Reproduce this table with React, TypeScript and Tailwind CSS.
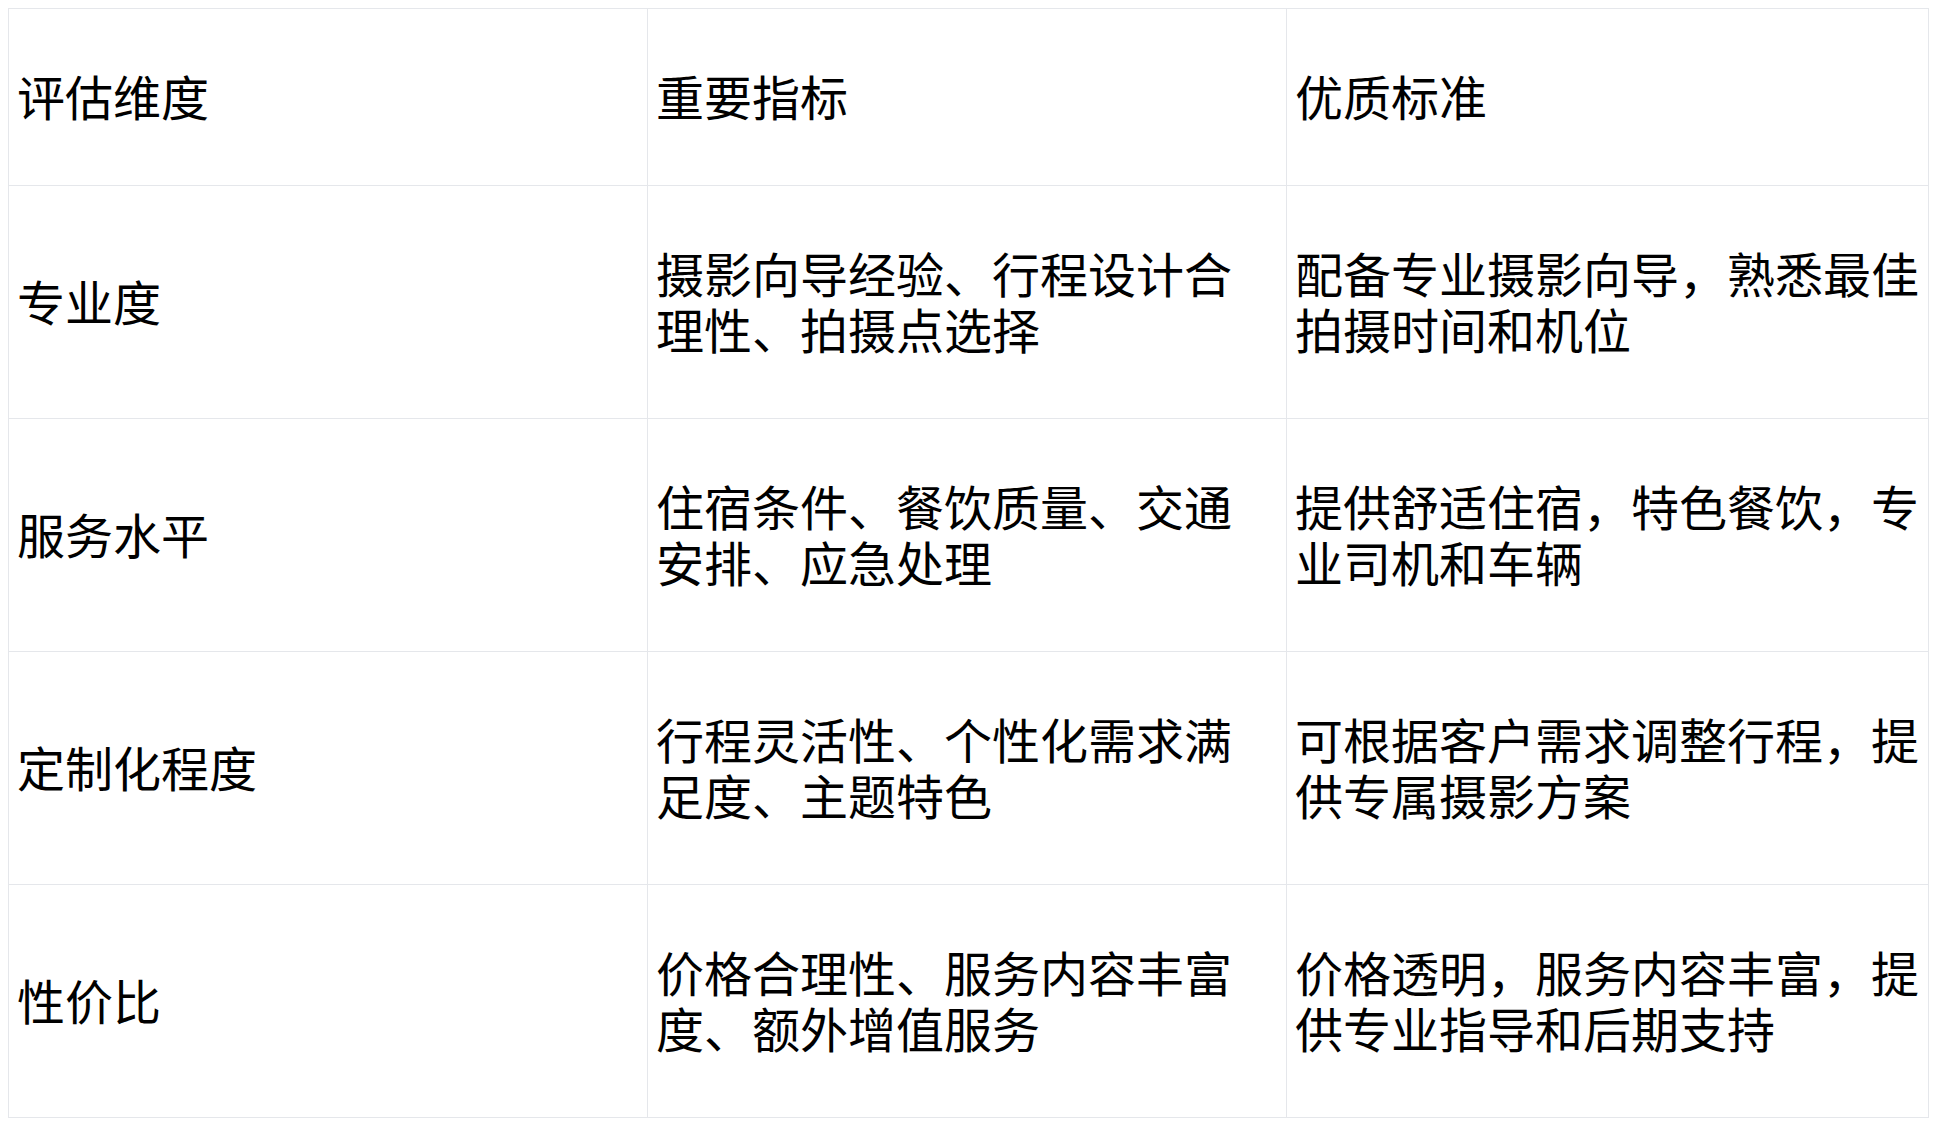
const rows = [
  ["专业度", "摄影向导经验、行程设计合理性、拍摄点选择", "配备专业摄影向导，熟悉最佳拍摄时间和机位"],
  ["服务水平", "住宿条件、餐饮质量、交通安排、应急处理", "提供舒适住宿，特色餐饮，专业司机和车辆"],
  ["定制化程度", "行程灵活性、个性化需求满足度、主题特色", "可根据客户需求调整行程，提供专属摄影方案"],
  ["性价比", "价格合理性、服务内容丰富度、额外增值服务", "价格透明，服务内容丰富，提供专业指导和后期支持"],
];

const cell = "border border-[#e5e7eb] px-2 pt-[58px] pb-[62px] align-middle text-left font-normal";

export default function App() {
  return (
    <div
      className="min-h-screen bg-white p-2 text-black text-[48px] leading-[56px]"
      style={{ fontFamily: '"Noto Sans CJK SC", "Noto Sans", sans-serif' }}
    >
      <table className="w-[1920px] table-fixed border-collapse">
        <colgroup>
          <col className="w-[639px]" />
          <col className="w-[639px]" />
          <col className="w-[642px]" />
        </colgroup>
        <thead>
          <tr>
            <th className={cell}>评估维度</th>
            <th className={cell}>重要指标</th>
            <th className={cell}>优质标准</th>
          </tr>
        </thead>
        <tbody>
          {rows.map((r) => (
            <tr key={r[0]}>
              {r.map((t, i) => (
                <td key={i} className={cell}>
                  {t}
                </td>
              ))}
            </tr>
          ))}
        </tbody>
      </table>
    </div>
  );
}
